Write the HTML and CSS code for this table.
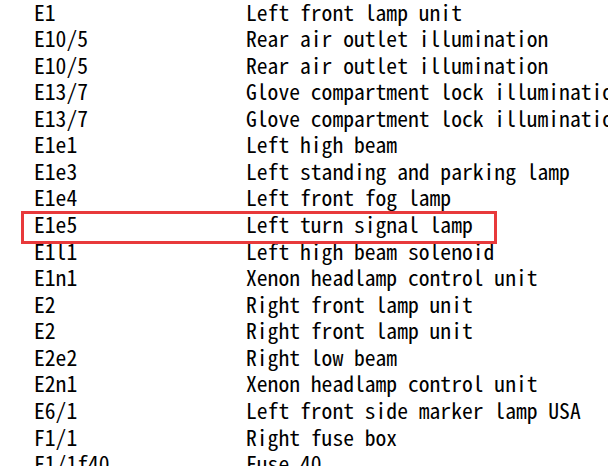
FILE: index.html
```html
<!DOCTYPE html>
<html lang="en">
<head>
    <meta charset="UTF-8">
    <title>Component list</title>
    <link rel="stylesheet" href="styles.css">
</head>
<body>
    <!-- component codes -->
    <div class="list">
        <div class="row"><span>E1</span><span>Left front lamp unit</span></div>
        <div class="row"><span>E10/5</span><span>Rear air outlet illumination</span></div>
        <div class="row"><span>E10/5</span><span>Rear air outlet illumination</span></div>
        <div class="row"><span>E13/7</span><span>Glove compartment lock illumination</span></div>
        <div class="row"><span>E13/7</span><span>Glove compartment lock illumination</span></div>
        <div class="row"><span>E1e1</span><span>Left high beam</span></div>
        <div class="row"><span>E1e3</span><span>Left standing and parking lamp</span></div>
        <div class="row"><span>E1e4</span><span>Left front fog lamp</span></div>
        <div class="row marked"><span>E1e5</span><span>Left turn signal lamp</span></div>
        <div class="row"><span>E1l1</span><span>Left high beam solenoid</span></div>
        <div class="row"><span>E1n1</span><span>Xenon headlamp control unit</span></div>
        <div class="row"><span>E2</span><span>Right front lamp unit</span></div>
        <div class="row"><span>E2</span><span>Right front lamp unit</span></div>
        <div class="row"><span>E2e2</span><span>Right low beam</span></div>
        <div class="row"><span>E2n1</span><span>Xenon headlamp control unit</span></div>
        <div class="row"><span>E6/1</span><span>Left front side marker lamp USA</span></div>
        <div class="row"><span>F1/1</span><span>Right fuse box</span></div>
        <div class="row"><span>F1/1f40</span><span>Fuse 40</span></div>
    </div>
</body>
</html>
```
FILE: styles.css
```css
body {
    margin: 0;
    background: #fff;
    overflow: hidden;
}
.list {
    margin-top: -1.5px;
    font-family: "Noto Sans Mono CJK JP", "Liberation Mono", monospace;
    font-size: 21.6px;
    line-height: 26.57px;
    color: #000;
    white-space: nowrap;
}
.row {
    display: grid;
    grid-template-columns: 212px 1fr;
    padding-left: 34px;
}
.marked {
    position: relative;
}
.marked::after {
    content: "";
    position: absolute;
    left: 21px;
    top: 0;
    width: 470px;
    height: 27px;
    border: 3px solid #e8393b;
}
```
